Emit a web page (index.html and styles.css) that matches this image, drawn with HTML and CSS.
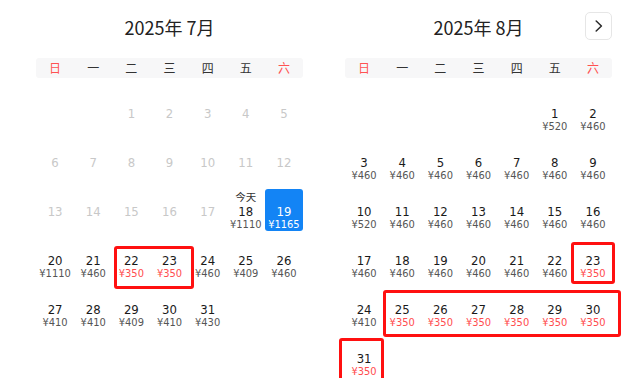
FILE: index.html
```html
<!DOCTYPE html>
<html lang="zh-CN">
<head>
<meta charset="utf-8">
<title>日历</title>
<link rel="stylesheet" href="styles.css">
</head>
<body>
<div class="page">
  <section class="month">
    <div class="head">2025年 7月</div>
    <div class="weekdays"><span class="we">日</span><span>一</span><span>二</span><span>三</span><span>四</span><span>五</span><span class="we">六</span></div>
    <div class="days">
      <div class="day"></div><div class="day"></div>
      <div class="day off"><div class="lab"></div><div class="num">1</div><div class="price"></div></div>
      <div class="day off"><div class="lab"></div><div class="num">2</div><div class="price"></div></div>
      <div class="day off"><div class="lab"></div><div class="num">3</div><div class="price"></div></div>
      <div class="day off"><div class="lab"></div><div class="num">4</div><div class="price"></div></div>
      <div class="day off"><div class="lab"></div><div class="num">5</div><div class="price"></div></div>
      <div class="day off"><div class="lab"></div><div class="num">6</div><div class="price"></div></div>
      <div class="day off"><div class="lab"></div><div class="num">7</div><div class="price"></div></div>
      <div class="day off"><div class="lab"></div><div class="num">8</div><div class="price"></div></div>
      <div class="day off"><div class="lab"></div><div class="num">9</div><div class="price"></div></div>
      <div class="day off"><div class="lab"></div><div class="num">10</div><div class="price"></div></div>
      <div class="day off"><div class="lab"></div><div class="num">11</div><div class="price"></div></div>
      <div class="day off"><div class="lab"></div><div class="num">12</div><div class="price"></div></div>
      <div class="day off"><div class="lab"></div><div class="num">13</div><div class="price"></div></div>
      <div class="day off"><div class="lab"></div><div class="num">14</div><div class="price"></div></div>
      <div class="day off"><div class="lab"></div><div class="num">15</div><div class="price"></div></div>
      <div class="day off"><div class="lab"></div><div class="num">16</div><div class="price"></div></div>
      <div class="day off"><div class="lab"></div><div class="num">17</div><div class="price"></div></div>
      <div class="day"><div class="lab">今天</div><div class="num">18</div><div class="price">¥1110</div></div>
      <div class="day sel"><div class="lab"></div><div class="num">19</div><div class="price">¥1165</div></div>
      <div class="day"><div class="lab"></div><div class="num">20</div><div class="price">¥1110</div></div>
      <div class="day"><div class="lab"></div><div class="num">21</div><div class="price">¥460</div></div>
      <div class="day"><div class="lab"></div><div class="num">22</div><div class="price low">¥350</div></div>
      <div class="day"><div class="lab"></div><div class="num">23</div><div class="price low">¥350</div></div>
      <div class="day"><div class="lab"></div><div class="num">24</div><div class="price">¥460</div></div>
      <div class="day"><div class="lab"></div><div class="num">25</div><div class="price">¥409</div></div>
      <div class="day"><div class="lab"></div><div class="num">26</div><div class="price">¥460</div></div>
      <div class="day"><div class="lab"></div><div class="num">27</div><div class="price">¥410</div></div>
      <div class="day"><div class="lab"></div><div class="num">28</div><div class="price">¥410</div></div>
      <div class="day"><div class="lab"></div><div class="num">29</div><div class="price">¥409</div></div>
      <div class="day"><div class="lab"></div><div class="num">30</div><div class="price">¥410</div></div>
      <div class="day"><div class="lab"></div><div class="num">31</div><div class="price">¥430</div></div>
    </div>
    <div class="mark mark-jul"></div>
  </section>

  <section class="month">
    <div class="head">2025年 8月
      <button class="next" type="button" aria-label="下个月"><svg width="8" height="12" viewBox="0 0 8 12"><polyline points="1.2,1 6.4,6 1.2,11" fill="none" stroke="#2a2a2a" stroke-width="1.5" stroke-linecap="round" stroke-linejoin="round"/></svg></button>
    </div>
    <div class="weekdays"><span class="we">日</span><span>一</span><span>二</span><span>三</span><span>四</span><span>五</span><span class="we">六</span></div>
    <div class="days">
      <div class="day"></div><div class="day"></div><div class="day"></div><div class="day"></div><div class="day"></div>
      <div class="day"><div class="lab"></div><div class="num">1</div><div class="price">¥520</div></div>
      <div class="day"><div class="lab"></div><div class="num">2</div><div class="price">¥460</div></div>
      <div class="day"><div class="lab"></div><div class="num">3</div><div class="price">¥460</div></div>
      <div class="day"><div class="lab"></div><div class="num">4</div><div class="price">¥460</div></div>
      <div class="day"><div class="lab"></div><div class="num">5</div><div class="price">¥460</div></div>
      <div class="day"><div class="lab"></div><div class="num">6</div><div class="price">¥460</div></div>
      <div class="day"><div class="lab"></div><div class="num">7</div><div class="price">¥460</div></div>
      <div class="day"><div class="lab"></div><div class="num">8</div><div class="price">¥460</div></div>
      <div class="day"><div class="lab"></div><div class="num">9</div><div class="price">¥460</div></div>
      <div class="day"><div class="lab"></div><div class="num">10</div><div class="price">¥520</div></div>
      <div class="day"><div class="lab"></div><div class="num">11</div><div class="price">¥460</div></div>
      <div class="day"><div class="lab"></div><div class="num">12</div><div class="price">¥460</div></div>
      <div class="day"><div class="lab"></div><div class="num">13</div><div class="price">¥460</div></div>
      <div class="day"><div class="lab"></div><div class="num">14</div><div class="price">¥460</div></div>
      <div class="day"><div class="lab"></div><div class="num">15</div><div class="price">¥460</div></div>
      <div class="day"><div class="lab"></div><div class="num">16</div><div class="price">¥460</div></div>
      <div class="day"><div class="lab"></div><div class="num">17</div><div class="price">¥460</div></div>
      <div class="day"><div class="lab"></div><div class="num">18</div><div class="price">¥460</div></div>
      <div class="day"><div class="lab"></div><div class="num">19</div><div class="price">¥460</div></div>
      <div class="day"><div class="lab"></div><div class="num">20</div><div class="price">¥460</div></div>
      <div class="day"><div class="lab"></div><div class="num">21</div><div class="price">¥460</div></div>
      <div class="day"><div class="lab"></div><div class="num">22</div><div class="price">¥460</div></div>
      <div class="day"><div class="lab"></div><div class="num">23</div><div class="price low">¥350</div></div>
      <div class="day"><div class="lab"></div><div class="num">24</div><div class="price">¥410</div></div>
      <div class="day"><div class="lab"></div><div class="num">25</div><div class="price low">¥350</div></div>
      <div class="day"><div class="lab"></div><div class="num">26</div><div class="price low">¥350</div></div>
      <div class="day"><div class="lab"></div><div class="num">27</div><div class="price low">¥350</div></div>
      <div class="day"><div class="lab"></div><div class="num">28</div><div class="price low">¥350</div></div>
      <div class="day"><div class="lab"></div><div class="num">29</div><div class="price low">¥350</div></div>
      <div class="day"><div class="lab"></div><div class="num">30</div><div class="price low">¥350</div></div>
      <div class="day"><div class="lab"></div><div class="num">31</div><div class="price low">¥350</div></div>
    </div>
    <div class="mark mark-a1"></div>
    <div class="mark mark-a2"></div>
    <div class="mark mark-a3"></div>
  </section>
</div>
</body>
</html>
```

FILE: styles.css
```css
html, body {
  margin: 0;
  padding: 0;
  background: #ffffff;
}

.page {
  display: flex;
  gap: 42px;
  padding-left: 36px;
  font-family: "DejaVu Sans Condensed", "DejaVu Sans", "Noto Sans CJK SC", sans-serif;
  font-stretch: condensed;
  color: #1a1a1a;
}

.month {
  position: relative;
  width: 267px;
  flex: none;
}

.head {
  position: relative;
  height: 54px;
  display: flex;
  align-items: center;
  justify-content: center;
  font-family: "Noto Sans CJK SC", sans-serif;
  font-stretch: normal;
  font-size: 18px;
  color: #222;
}

.next {
  position: absolute;
  right: 0;
  top: 12px;
  width: 27px;
  height: 28px;
  box-sizing: border-box;
  padding: 0;
  border: 1px solid #e6e6e6;
  border-radius: 5px;
  background: #fff;
  display: flex;
  align-items: center;
  justify-content: center;
}

.weekdays {
  margin-top: 4px;
  height: 20px;
  display: grid;
  grid-template-columns: repeat(7, 1fr);
  background: #f7f7f8;
  border-radius: 3px;
  font-family: "Noto Sans CJK SC", sans-serif;
  font-stretch: normal;
  font-size: 12px;
  line-height: 20px;
  text-align: center;
  color: #333;
}

.weekdays .we {
  color: #ff5252;
}

.days {
  margin-top: 13px;
  display: grid;
  grid-template-columns: repeat(7, 1fr);
  grid-auto-rows: 42px;
  row-gap: 7px;
}

.day {
  box-sizing: border-box;
  padding-top: 2px;
  text-align: center;
  border-radius: 3px;
}

.lab {
  height: 12px;
  line-height: 12px;
  font-family: "Noto Sans CJK SC", sans-serif;
  font-stretch: normal;
  font-size: 10.5px;
  color: #333;
}

.num {
  height: 15px;
  line-height: 15px;
  margin-top: 1px;
  font-size: 13px;
  color: #1a1a1a;
}

.price {
  height: 12px;
  line-height: 12px;
  font-size: 11px;
  color: #555;
}

.price.low {
  color: #ff4d4f;
}

.off .num {
  color: #c8c8c8;
}

.sel {
  background: #1384f5;
}

.sel .num,
.sel .price {
  color: #fff;
}

.mark {
  position: absolute;
  box-sizing: border-box;
  border: 3px solid #ff1010;
  border-radius: 3px;
  pointer-events: none;
}

.mark-jul { left: 78px; top: 246px; width: 80px; height: 43px; }
.mark-a1 { left: 226px; top: 242px; width: 44px; height: 42px; }
.mark-a2 { left: 38px; top: 290px; width: 238px; height: 47px; }
.mark-a3 { left: -6px; top: 338px; width: 45px; height: 45px; }
```
